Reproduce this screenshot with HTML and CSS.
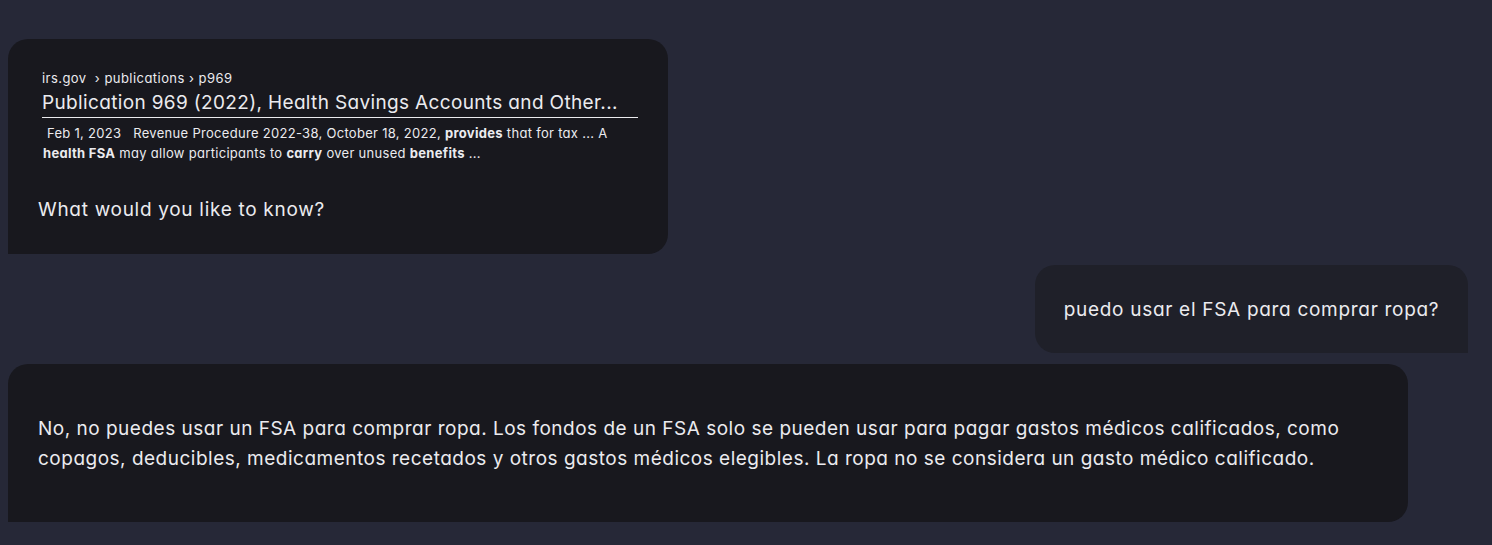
FILE: index.html
```html
<!DOCTYPE html>
<html>
<head>
<meta charset="utf-8">
<link rel="stylesheet" href="styles.css">
</head>
<body>
<div class="chat">
  <div class="bubble bot first">
    <div class="source">
      <div class="crumbs">irs.gov &nbsp;› publications › p969</div>
      <div class="title">Publication 969 (2022), Health Savings Accounts and Other...</div>
      <div class="snippet">&nbsp;Feb 1, 2023 &nbsp; Revenue Procedure 2022-38, October 18, 2022, <b>provides</b> that for tax ... A <b>health FSA</b> may allow participants to <b>carry</b> over unused <b>benefits</b> ...</div>
    </div>
    <p class="msg">What would you like to know?</p>
  </div>
  <div class="row-user">
    <div class="bubble user"><p class="msg">puedo usar el FSA para comprar ropa?</p></div>
  </div>
  <div class="bubble bot answer">
    <p class="msg">No, no puedes usar un FSA para comprar ropa. Los fondos de un FSA solo se pueden usar para pagar gastos médicos calificados, como copagos, deducibles, medicamentos recetados y otros gastos médicos elegibles. La ropa no se considera un gasto médico calificado.</p>
  </div>
</div>
</body>
</html>
```
FILE: styles.css
```css
html, body { margin: 0; padding: 0; }
body {
  background: #262837;
  color: #ebebef;
  font-family: "Inter", "Noto Sans", sans-serif;
  font-feature-settings: "cv11";
  width: 1492px;
  height: 545px;
  overflow: hidden;
}
.chat {
  display: flex;
  flex-direction: column;
  padding: 39px 24px 0 8px;
  gap: 11px;
}
.bubble { box-sizing: border-box; }
.bot { background: #18181e; border-radius: 20px 20px 20px 0; }
.first { width: 660px; height: 215px; padding: 31px 30px 0 30px; }
.source { padding-left: 4px; }
.crumbs { font-size: 13px; line-height: 16px; letter-spacing: 0.45px; }
.title {
  font-size: 19px;
  line-height: 24px;
  letter-spacing: 0.35px;
  padding-bottom: 2px;
  border-bottom: 1px solid #ebebef;
  margin-top: 5px;
  width: 596px;
  white-space: nowrap;
}
.snippet {
  font-size: 13px;
  line-height: 20px;
  letter-spacing: 0.3px;
  margin-top: 5px;
  padding-left: 1px;
  width: 596px;
  box-sizing: border-box;
}
.snippet b { font-weight: 700; }
.msg { margin: 0; font-size: 19px; line-height: 29px; letter-spacing: 0.7px; }
.first .msg { margin-top: 32px; }
.row-user { display: flex; justify-content: flex-end; }
.user {
  background: #1f2029;
  border-radius: 20px 20px 0 20px;
  width: 433px; height: 88px;
  display: flex; align-items: center; justify-content: center;
}
.answer { width: 1400px; height: 158px; padding: 50px 30px 0 30px; }
.answer .msg { letter-spacing: 0.5px; line-height: 30px; }
```
